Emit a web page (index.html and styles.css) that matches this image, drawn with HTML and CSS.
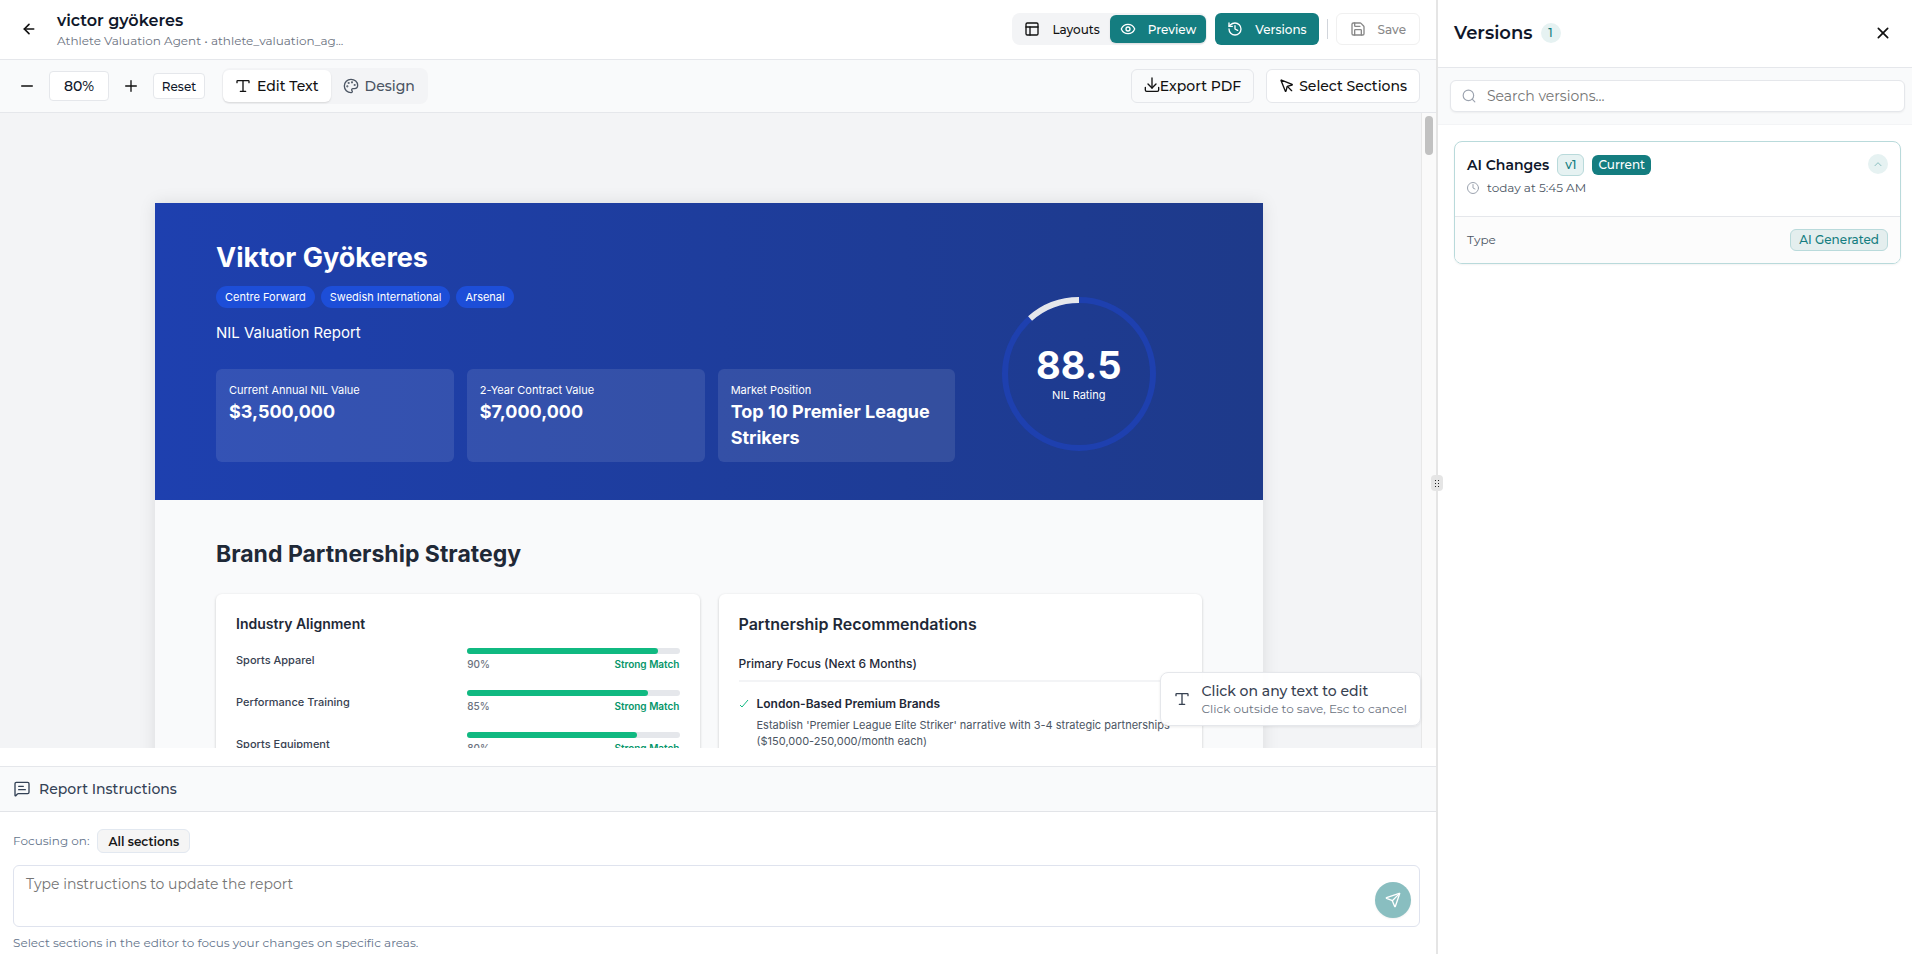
FILE: index.html
```html
<!DOCTYPE html>
<html lang="en">
<head>
  <meta charset="UTF-8" />
  <meta name="viewport" content="width=device-width, initial-scale=1.0"/>
  <title>victor gyökeres - Report Editor</title>
  <link rel="stylesheet" href="styles.css">
</head>
<body>
  <div class="app">
    <main class="editor">
      <header class="topbar">
        <button class="icon-btn back" aria-label="Back">
          <svg class="icon bold" viewBox="0 0 24 24"><path d="m12 19-7-7 7-7"/><path d="M19 12H5"/></svg>
        </button>
        <div class="doc-info">
          <h1>victor gyökeres</h1>
          <p>Athlete Valuation Agent • athlete_valuation_ag...</p>
        </div>
        <div class="actions">
          <div class="segmented">
            <button class="btn plain">
              <svg class="icon" viewBox="0 0 24 24"><rect x="3" y="3" width="18" height="18" rx="2"/><path d="M3 9h18"/><path d="M9 21V9"/></svg>
              Layouts
            </button>
            <button class="btn teal small">
              <svg class="icon" viewBox="0 0 24 24"><path d="M2.1 12.3a1 1 0 0 1 0-.7 10.75 10.75 0 0 1 19.8 0 1 1 0 0 1 0 .7 10.75 10.75 0 0 1-19.8 0"/><circle cx="12" cy="12" r="3"/></svg>
              Preview
            </button>
          </div>
          <button class="btn teal">
            <svg class="icon" viewBox="0 0 24 24"><path d="M3 12a9 9 0 1 0 9-9 9.75 9.75 0 0 0-6.74 2.74L3 8"/><path d="M3 3v5h5"/><path d="M12 7v5l4 2"/></svg>
            Versions
          </button>
          <span class="separator"></span>
          <button class="btn save" disabled>
            <svg class="icon" viewBox="0 0 24 24"><path d="M15.2 3a2 2 0 0 1 1.4.6l3.8 3.8a2 2 0 0 1 .6 1.4V19a2 2 0 0 1-2 2H5a2 2 0 0 1-2-2V5a2 2 0 0 1 2-2z"/><path d="M17 21v-7a1 1 0 0 0-1-1H8a1 1 0 0 0-1 1v7"/><path d="M7 3v4a1 1 0 0 0 1 1h7"/></svg>
            Save
          </button>
        </div>
      </header>

      <div class="toolbar">
        <div class="zoom">
          <button class="icon-btn" aria-label="Zoom out">
            <svg class="icon" viewBox="0 0 24 24"><path d="M4 12h16"/></svg>
          </button>
          <button class="zoom-value">80%</button>
          <button class="icon-btn" aria-label="Zoom in">
            <svg class="icon" viewBox="0 0 24 24"><path d="M4 12h16"/><path d="M12 4v16"/></svg>
          </button>
          <button class="reset">Reset</button>
        </div>
        <div class="modes">
          <button class="mode active">
            <svg class="icon" viewBox="0 0 24 24"><path d="M12 4v16"/><path d="M3 7V5a1 1 0 0 1 1-1h16a1 1 0 0 1 1 1v2"/><path d="M8 20h8"/></svg>
            Edit Text
          </button>
          <button class="mode">
            <svg class="icon" viewBox="0 0 24 24"><path d="M12 22a1 1 0 0 1 0-20 10 9 0 0 1 10 9 5 5 0 0 1-5 5h-2.25a1.75 1.75 0 0 0-1.4 2.8l.3.4a1.75 1.75 0 0 1-1.4 2.8z"/><circle cx="13.5" cy="6.5" r=".6"/><circle cx="17.5" cy="10.5" r=".6"/><circle cx="6.5" cy="12.5" r=".6"/><circle cx="8.5" cy="7.5" r=".6"/></svg>
            Design
          </button>
        </div>
        <div class="tools">
          <button class="tool export">
            <svg class="icon" viewBox="0 0 24 24"><path d="M12 0v15"/><path d="m6 9 6 6 6-6"/><path d="M2 14v4a2 2 0 0 0 2 2h16a2 2 0 0 0 2-2v-4"/></svg>
            Export PDF
          </button>
          <button class="tool">
            <svg class="icon" viewBox="0 0 24 24"><path d="M12.6 12.6 19 19"/><path d="M3.7 3.04a.5.5 0 0 0-.65.65l6.5 16a.5.5 0 0 0 .95-.06l1.57-6.08a2 2 0 0 1 1.48-1.48l6.08-1.57a.5.5 0 0 0 .06-.95z"/></svg>
            Select Sections
          </button>
        </div>
      </div>

      <div class="stage">
        <div class="canvas">
          <article class="report">
            <section class="hero">
              <div>
                <h2>Viktor Gyökeres</h2>
                <div class="pills">
                  <span>Centre Forward</span>
                  <span>Swedish International</span>
                  <span>Arsenal</span>
                </div>
                <p class="subtitle">NIL Valuation Report</p>
                <div class="stats">
                  <div class="stat">
                    <p>Current Annual NIL Value</p>
                    <strong>$3,500,000</strong>
                  </div>
                  <div class="stat">
                    <p>2-Year Contract Value</p>
                    <strong>$7,000,000</strong>
                  </div>
                  <div class="stat">
                    <p>Market Position</p>
                    <strong>Top 10 Premier League Strikers</strong>
                  </div>
                </div>
              </div>
              <div class="rating">
                <svg class="ring" viewBox="0 0 154 154">
                  <circle class="ring-fill" cx="77" cy="77" r="74"/>
                  <circle class="ring-rest" cx="77" cy="77" r="74" pathLength="100"/>
                </svg>
                <div class="rating-text">
                  <strong>88.5</strong>
                  <span>NIL Rating</span>
                </div>
              </div>
            </section>

            <section class="strategy">
              <h2>Brand Partnership Strategy</h2>
              <div class="columns">
                <div class="card">
                  <h3>Industry Alignment</h3>
                  <div class="align-row">
                    <span>Sports Apparel</span>
                    <div>
                      <div class="bar"><i style="width: 90%"></i></div>
                      <div class="bar-info"><span>90%</span><b>Strong Match</b></div>
                    </div>
                  </div>
                  <div class="align-row">
                    <span>Performance Training</span>
                    <div>
                      <div class="bar"><i style="width: 85%"></i></div>
                      <div class="bar-info"><span>85%</span><b>Strong Match</b></div>
                    </div>
                  </div>
                  <div class="align-row">
                    <span>Sports Equipment</span>
                    <div>
                      <div class="bar"><i style="width: 80%"></i></div>
                      <div class="bar-info"><span>80%</span><b>Strong Match</b></div>
                    </div>
                  </div>
                </div>
                <div class="card">
                  <h3 class="large">Partnership Recommendations</h3>
                  <h4>Primary Focus (Next 6 Months)</h4>
                  <div class="rec">
                    <svg class="check" viewBox="0 0 10 10"><path d="m1 6 2 2 6-7"/></svg>
                    <div>
                      <h5>London-Based Premium Brands</h5>
                      <p>Establish 'Premier League Elite Striker' narrative with 3-4 strategic partnerships ($150,000-250,000/month each)</p>
                    </div>
                  </div>
                </div>
              </div>
            </section>
          </article>
        </div>
        <div class="scrollbar"><div class="thumb"></div></div>
        <div class="hint-box">
          <svg class="icon" viewBox="0 0 24 24"><path d="M12 4v16"/><path d="M3 7V5a1 1 0 0 1 1-1h16a1 1 0 0 1 1 1v2"/><path d="M8 20h8"/></svg>
          <div>
            <p>Click on any text to edit</p>
            <small>Click outside to save, Esc to cancel</small>
          </div>
        </div>
      </div>

      <section class="instructions">
        <h2>
          <svg class="icon" viewBox="0 0 24 24"><path d="M22.500 17a2 2 0 0 1-2 2H6.500a2 2 0 0 0-1.400.6l-2.400 2.400A.7.7 0 0 1 1.500 21.500V4a2 2 0 0 1 2-2h17a2 2 0 0 1 2 2z"/><path d="M7 8h7"/><path d="M7 13h10"/></svg>
          Report Instructions
        </h2>
        <div class="instructions-body">
          <div class="focus">Focusing on: <button class="chip">All sections</button></div>
          <div class="prompt">
            <textarea aria-label="Instructions" placeholder="Type instructions to update the report"></textarea>
            <button class="send" aria-label="Send">
              <svg class="icon" viewBox="0 0 24 24"><path d="M14.5 21.700a.5.5 0 0 0 .94-.03l6.5-19a.5.5 0 0 0-.63-.63l-19 6.500a.5.5 0 0 0-.03.93l7.900 3.200a2 2 0 0 1 1.100 1.100z"/><path d="m21.900 2.100-10.900 10.900"/></svg>
            </button>
          </div>
          <p class="note">Select sections in the editor to focus your changes on specific areas.</p>
        </div>
      </section>
    </main>

    <aside class="versions">
      <div class="grip"><i></i><i></i><i></i><i></i><i></i><i></i></div>
      <header class="versions-head">
        <h2>Versions</h2>
        <span class="count">1</span>
        <button class="icon-btn" aria-label="Close">
          <svg class="icon bold" viewBox="0 0 24 24"><path d="M19 5 5 19"/><path d="m5 5 14 14"/></svg>
        </button>
      </header>
      <div class="search">
        <label class="search-box">
          <svg class="icon" viewBox="0 0 24 24"><circle cx="11" cy="11" r="9"/><path d="m22 22-4.500-4.500"/></svg>
          <input type="text" aria-label="Search versions" placeholder="Search versions...">
        </label>
      </div>
      <div class="version">
        <div class="version-top">
          <div>
            <div class="version-title">
              <h3>AI Changes</h3>
              <span class="tag">v1</span>
              <span class="tag current">Current</span>
            </div>
            <p class="time">
              <svg class="icon" viewBox="0 0 24 24"><circle cx="12" cy="12" r="11"/><path d="M12 5v7l4 2"/></svg>
              today at 5:45 AM
            </p>
          </div>
          <button class="collapse" aria-label="Collapse">
            <svg class="icon" viewBox="0 0 24 24"><path d="m3 17 9-9 9 9"/></svg>
          </button>
        </div>
        <div class="version-type">
          <span>Type</span>
          <span class="tag generated">AI Generated</span>
        </div>
      </div>
    </aside>
  </div>
</body>
</html>
```
FILE: styles.css
```css
* {
  box-sizing: border-box;
}

body {
  margin: 0;
  font-family: Montserrat, Inter, sans-serif;
  font-size: 14px;
  line-height: 20px;
  color: #0f172a;
  background: #fff;
}

h1, h2, h3, h4, h5, p {
  margin: 0;
}

button, input, textarea {
  font-family: inherit;
  color: inherit;
}

button {
  display: flex;
  align-items: center;
  justify-content: center;
  padding: 0;
  border: 0;
  background: none;
  cursor: pointer;
  white-space: nowrap;
}

.icon {
  flex: none;
  width: 16px;
  height: 16px;
  fill: none;
  stroke: currentColor;
  stroke-width: 2;
  stroke-linecap: round;
  stroke-linejoin: round;
}

.icon.bold {
  stroke-width: 2.5;
}

.app {
  display: flex;
  height: 100vh;
}

.editor {
  flex: 1;
  min-width: 0;
  display: flex;
  flex-direction: column;
}

/* top bar */
.topbar {
  display: flex;
  align-items: center;
  height: 60px;
  padding: 0 16px 1px 13px;
  border-bottom: 1px solid #e5e7eb;
}

.icon-btn {
  width: 32px;
  height: 32px;
  color: #111;
}

.doc-info {
  flex: 1;
  padding-top: 4px;
  margin-left: 12px;
}

.doc-info h1 {
  font-size: 16px;
  line-height: 20px;
  font-weight: 600;
}

.doc-info p {
  font-size: 12px;
  color: #6b7280;
}

.actions {
  display: flex;
  align-items: center;
  gap: 8px;
}

.segmented {
  display: flex;
  align-items: center;
  padding-right: 1px;
  border-radius: 8px;
  background: #f3f4f6;
}

.btn {
  height: 32px;
  gap: 12px;
  padding: 0 12px;
  border-radius: 6px;
  font-size: 12px;
  font-weight: 500;
}

.btn.plain {
  padding-right: 10px;
  color: #111;
}

.btn.teal {
  color: #fff;
  background: #147d80;
}

.btn.small {
  height: 28px;
  padding: 0 10px;
  box-shadow: 0 1px 2px rgba(0, 0, 0, 0.1);
}

.separator {
  width: 1px;
  height: 20px;
  background: #d1d5db;
}

.btn.save {
  padding: 0 13px;
  border: 1px solid #f0f0f0;
  color: #888;
}

/* toolbar */
.toolbar {
  display: flex;
  align-items: center;
  height: 53px;
  padding: 0 16px 0 11px;
  border-bottom: 1px solid #e5e7eb;
  background: #f9fafb;
}

.zoom {
  display: flex;
  align-items: center;
}

.zoom-value {
  width: 60px;
  height: 30px;
  margin: 0 6px;
  border: 1px solid #e5e7eb;
  border-radius: 4px;
  background: #fff;
  font-size: 14px;
  font-weight: 500;
}

.reset {
  width: 52px;
  height: 26px;
  margin-left: 6px;
  border: 1px solid #e5e7eb;
  border-radius: 4px;
  background: #fff;
  font-size: 12px;
  font-weight: 500;
}

.modes {
  display: flex;
  padding: 2px 1px;
  margin-left: 17px;
  border-radius: 8px;
  background: #f3f4f6;
}

.mode {
  height: 32px;
  gap: 6px;
  padding: 0 12px;
  border-radius: 6px;
  font-size: 14px;
  font-weight: 500;
  color: #4b5563;
}

.mode.active {
  color: #111;
  background: #fff;
  box-shadow: 0 1px 2px rgba(0, 0, 0, 0.12);
}

.tools {
  display: flex;
  gap: 12px;
  margin-left: auto;
}

.tool {
  height: 34px;
  gap: 4px;
  padding: 0 12px;
  border: 1px solid #e5e7eb;
  border-radius: 6px;
  background: #fff;
  font-size: 14px;
  font-weight: 500;
  color: #111;
}

.tool.export {
  gap: 0;
  background: #f9fafb;
}

.tool.export .icon {
  overflow: visible;
}

/* report canvas */
.stage {
  position: relative;
  flex: 1;
  min-height: 0;
  display: flex;
  margin-bottom: 18px;
}

.canvas {
  flex: 1;
  overflow: hidden;
  padding: 90px 158px 0 155px;
  background: #f3f4f6;
}

.scrollbar {
  width: 15px;
  padding: 3px;
  border-left: 1px solid #e8e8e8;
  background: #fafafa;
}

.thumb {
  width: 8px;
  height: 39px;
  border-radius: 4px;
  background: #c1c1c1;
}

.report {
  font-family: Inter, sans-serif;
  background: #f9fafb;
  box-shadow: 0 0 16px rgba(0, 0, 0, 0.1);
}

.hero {
  display: grid;
  grid-template-columns: 3fr 1fr;
  align-items: center;
  padding: 37px 61px 38px;
  color: #fff;
  background: linear-gradient(90deg, #1e40af, #1e3a8a);
}

.hero h2 {
  font-size: 27px;
  line-height: 35px;
  font-weight: 700;
}

.pills {
  display: flex;
  gap: 6px;
  margin: 11px 0 13px;
}

.pills span {
  padding: 0 9px;
  border-radius: 11px;
  background: #1d4ed8;
  font-size: 11px;
  line-height: 22px;
}

.subtitle {
  font-size: 15px;
  line-height: 24px;
}

.stats {
  display: grid;
  grid-template-columns: repeat(3, 1fr);
  gap: 13px;
  margin-top: 24px;
}

.stat {
  padding: 13px 13px 11px;
  border-radius: 6px;
  background: rgba(255, 255, 255, 0.1);
}

.stat p {
  font-size: 11px;
  line-height: 17px;
}

.stat strong {
  display: block;
  font-size: 18px;
  line-height: 26px;
  font-weight: 700;
}

.rating {
  display: grid;
  place-items: center;
  padding-top: 46px;
}

.rating > * {
  grid-area: 1 / 1;
}

.ring {
  width: 154px;
  height: 154px;
  fill: none;
  stroke-width: 6;
}

.ring-fill {
  stroke: #1e40af;
}

.ring-rest {
  stroke: #e5e7eb;
  stroke-dasharray: 11.5 100;
  stroke-dashoffset: -63.5;
}

.rating-text {
  padding-top: 2px;
  text-align: center;
}

.rating-text strong {
  display: block;
  font-size: 38px;
  line-height: 38px;
}

.rating-text span {
  font-size: 11px;
}

.strategy {
  padding: 38px 61px;
  color: #1f2937;
}

.strategy h2 {
  font-size: 23px;
  line-height: 32px;
  font-weight: 700;
}

.columns {
  display: grid;
  grid-template-columns: 1fr 1fr;
  gap: 19px;
  margin-top: 24px;
}

.card {
  padding: 20px;
  border-radius: 6px;
  background: #fff;
  box-shadow: 0 1px 3px rgba(0, 0, 0, 0.2);
}

.card h3 {
  font-size: 14px;
  line-height: 20px;
  font-weight: 600;
}

.card h3.large {
  font-size: 16px;
}

.align-row {
  display: grid;
  grid-template-columns: 1fr 1fr;
  align-items: center;
  gap: 19px;
  margin-bottom: 18px;
  font-size: 11px;
  font-weight: 500;
  color: #374151;
}

.card h3 + .align-row {
  margin-top: 14px;
}

.bar {
  height: 6px;
  margin-bottom: 3px;
  border-radius: 3px;
  background: #e5e7eb;
}

.bar i {
  display: block;
  height: 6px;
  border-radius: 3px;
  background: #10b981;
}

.bar-info {
  display: flex;
  justify-content: space-between;
  font-size: 10px;
  line-height: 15px;
  color: #6b7280;
}

.bar-info b {
  font-weight: 600;
  color: #059669;
}

.card h4 {
  margin-top: 20px;
  padding-bottom: 6px;
  border-bottom: 2px solid #f3f4f6;
  font-size: 12px;
  line-height: 20px;
  font-weight: 500;
}

.rec {
  display: flex;
  gap: 8px;
  margin-top: 12px;
}

.check {
  flex: none;
  width: 10px;
  height: 10px;
  margin-top: 5px;
  fill: none;
  stroke: #10b981;
}

.rec h5 {
  font-size: 12px;
  line-height: 20px;
  font-weight: 600;
}

.rec p {
  margin-top: 3px;
  font-size: 11px;
  line-height: 16px;
  color: #4b5563;
}

.hint-box {
  position: absolute;
  right: 15px;
  bottom: 22px;
  display: flex;
  align-items: center;
  gap: 12px;
  padding: 8px 13px;
  border: 1px solid #e5e7eb;
  border-radius: 8px;
  background: rgba(255, 255, 255, 0.95);
  box-shadow: 0 1px 3px rgba(0, 0, 0, 0.08);
  color: #374151;
}

.hint-box p {
  font-size: 14px;
  line-height: 20px;
  font-weight: 500;
}

.hint-box small {
  display: block;
  font-size: 12px;
  line-height: 16px;
  color: #6b7280;
}

/* instructions panel */
.instructions {
  border-top: 1px solid #e5e7eb;
}

.instructions h2 {
  display: flex;
  align-items: center;
  gap: 9px;
  height: 45px;
  padding: 0 14px;
  border-bottom: 1px solid #e2e4e8;
  background: #f9fafb;
  font-size: 14px;
  font-weight: 500;
  color: #334155;
}

.instructions-body {
  padding: 17px 16px 0 13px;
}

.focus {
  display: flex;
  align-items: center;
  gap: 8px;
  font-size: 12px;
  color: #64748b;
}

.chip {
  height: 24px;
  padding: 0 10px;
  border: 1px solid #e2e8f0;
  border-radius: 6px;
  background: #f5f5f5;
  font-size: 12px;
  font-weight: 600;
  color: #171717;
}

.prompt {
  position: relative;
  margin-top: 12px;
}

.prompt textarea {
  display: block;
  width: 100%;
  height: 62px;
  padding: 8px 50px 8px 12px;
  border: 1px solid #dfe3ee;
  border-radius: 6px;
  resize: none;
  font-size: 14px;
  line-height: 20px;
}

.send {
  position: absolute;
  right: 9px;
  bottom: 9px;
  width: 36px;
  height: 36px;
  border-radius: 50%;
  color: #fff;
  background: #89bec0;
  box-shadow: 0 1px 2px rgba(0, 0, 0, 0.06);
}

.note {
  padding: 6px 0 1px;
  font-size: 12px;
  color: #64748b;
}

/* versions panel */
.versions {
  position: relative;
  width: 476px;
  border-left: 2px solid #e5e5e5;
}

.grip {
  position: absolute;
  left: -7px;
  top: 475px;
  display: grid;
  grid-template-columns: 1px 1px;
  gap: 2px;
  place-content: center;
  width: 12px;
  height: 16px;
  border-radius: 4px;
  background: #e5e5e5;
}

.grip i {
  height: 1px;
  background: #222;
}

.versions-head {
  display: flex;
  align-items: center;
  height: 68px;
  padding: 0 13px 1px 16px;
  border-bottom: 1px solid #e5e7eb;
}

.versions-head h2 {
  font-size: 18px;
  font-weight: 600;
}

.count {
  width: 20px;
  margin: 0 auto 0 8px;
  border-radius: 10px;
  background: #e6f2f2;
  font-size: 12px;
  font-weight: 500;
  text-align: center;
  color: #147d80;
}

.search {
  padding: 12px 7px 12px 12px;
  border-bottom: 1px solid #f3f4f6;
  background: #f9fafb;
}

.search-box {
  display: flex;
  align-items: center;
  gap: 11px;
  height: 32px;
  padding: 0 11px;
  border: 1px solid #e5e7eb;
  border-radius: 6px;
  background: #fff;
  box-shadow: 0 1px 2px rgba(0, 0, 0, 0.05);
  color: #9ca3af;
}

.search-box .icon {
  width: 14px;
  height: 14px;
}

.search-box input {
  flex: 1;
  padding: 0;
  border: 0;
  outline: 0;
  font-size: 14px;
  color: #111;
}

.version {
  margin: 16px 11px 0 16px;
  border: 1px solid #b9dadb;
  border-radius: 8px;
  overflow: hidden;
  box-shadow: 0 1px 2px rgba(0, 0, 0, 0.05);
}

.version-top {
  display: flex;
  align-items: flex-start;
  justify-content: space-between;
  padding: 12px 12px 18px;
}

.version-title {
  display: flex;
  align-items: center;
  gap: 8px;
}

.version-title h3 {
  font-size: 14px;
  font-weight: 600;
}

.tag {
  padding: 0 7px;
  border: 1px solid #b9dadb;
  border-radius: 6px;
  background: #e6f2f2;
  font-size: 12px;
  line-height: 20px;
  font-weight: 500;
  color: #147d80;
}

.tag.current {
  padding: 0 6px;
  border: 0;
  color: #fff;
  background: #147d80;
}

.tag.generated {
  padding: 0 8px;
  background: #e4eeee;
}

.time {
  display: flex;
  align-items: center;
  gap: 8px;
  margin-top: 2px;
  font-size: 12px;
  color: #4b5563;
}

.time .icon {
  width: 12px;
  height: 12px;
  color: #9ca3af;
}

.collapse {
  width: 20px;
  height: 20px;
  border-radius: 50%;
  background: #e6f2f2;
  color: #89bec0;
}

.collapse .icon {
  width: 8px;
  height: 8px;
  stroke-width: 3;
}

.version-type {
  display: flex;
  align-items: center;
  justify-content: space-between;
  padding: 12px;
  border-top: 1px solid #e5e7eb;
  background: #fcfcfc;
  font-size: 12px;
  color: #4b5563;
}
```
